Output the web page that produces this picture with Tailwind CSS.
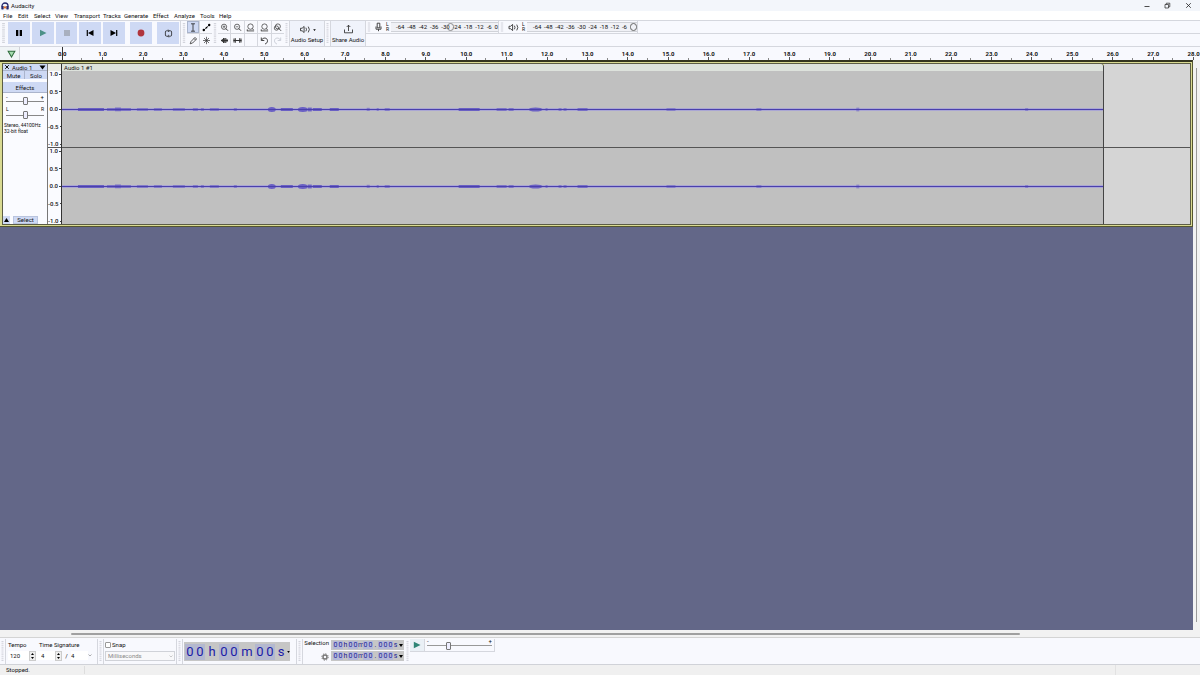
<!DOCTYPE html>
<html lang="en">
<head>
<meta charset="utf-8">
<title>Audacity</title>
<script src="https://cdn.jsdelivr.net/npm/@tailwindcss/browser@4"></script>
</head>
<body class="h-screen overflow-hidden flex flex-col bg-[#f8f9fe] text-[#111] text-[6px] leading-[8px] font-[Roboto,'Liberation_Sans',sans-serif]">
<svg width="0" height="0" class="absolute">
  <symbol id="wave" viewBox="0 0 1042 8" preserveAspectRatio="none">
    <rect y="3" width="1042" height="3" fill="#aaa6d4"/>
    <g fill="#6a60c4">
      <rect x="16" y="3" width="26" height="3"/><rect x="45" y="3" width="8" height="3" opacity=".7"/><rect x="53" y="2.6" width="6" height="3.6"/><rect x="59" y="3" width="10" height="3" opacity=".7"/>
      <g opacity=".6"><rect x="75" y="3" width="11" height="3"/><rect x="92" y="3" width="8" height="3"/><rect x="111" y="3" width="12" height="3"/><rect x="131" y="3" width="5" height="3"/><rect x="139" y="3" width="3" height="3"/><rect x="148" y="3" width="9" height="3"/><rect x="172" y="3" width="3" height="3"/></g>
      <ellipse cx="210" cy="4.5" rx="4" ry="2.5"/><rect x="219" y="3" width="12" height="3"/><ellipse cx="241" cy="4.5" rx="5" ry="2.5"/><rect x="246" y="2.6" width="4" height="3.8"/><rect x="251" y="3" width="9" height="3"/><rect x="268" y="3" width="9" height="3"/>
      <g opacity=".6"><rect x="305" y="2.8" width="3" height="3.2"/><rect x="315" y="3" width="2" height="3"/><rect x="323" y="3" width="5" height="3"/></g>
      <rect x="397" y="3" width="21" height="3"/><g opacity=".7"><rect x="435" y="3" width="10" height="3"/><rect x="447" y="3" width="5" height="3"/></g><ellipse cx="474" cy="4.5" rx="7" ry="2.1"/>
      <g opacity=".6"><rect x="484" y="3" width="2" height="3"/><rect x="497" y="3" width="3" height="3"/><rect x="502" y="3" width="3" height="3"/></g><rect x="516" y="3" width="10" height="3" opacity=".8"/>
      <g opacity=".55"><rect x="605" y="3" width="9" height="3"/><rect x="695" y="3" width="5" height="3"/><rect x="795" y="2.6" width="3" height="3.8"/><rect x="964" y="3" width="3" height="3"/></g>
    </g>
    <rect y="4" width="1042" height="1" fill="#4a40ac"/>
  </symbol>
  <symbol id="lens" viewBox="0 0 10 10"><circle cx="4.5" cy="4.2" r="2.9" fill="none" stroke="#333" stroke-width=".8"/><path d="M6.5 6.2 8.8 8.5" stroke="#333" stroke-width="1.1"/></symbol>
  <symbol id="fit" viewBox="0 0 10 10"><circle cx="5" cy="4" r="3" fill="none" stroke="#333" stroke-width=".8"/><path d="M7 6.2 8.5 7.8M1 8.8h8M1.4 7v1.8" fill="none" stroke="#333" stroke-width=".9"/></symbol>
  <symbol id="speaker" viewBox="0 0 12 10"><path d="M1 3.6h1.8L5 1.6v6.8L2.8 6.4H1zM7 3q1.3 2 0 4M9.6 1.8q2.4 3.2 0 6.4" fill="none" stroke="#222" stroke-width=".9"/></symbol>
  <symbol id="grip" viewBox="0 0 5 24" preserveAspectRatio="none"><path d="M2.5 2v20" stroke="#d2d4dc" stroke-width="2" stroke-dasharray="1 1"/></symbol>
</svg>

<header class="h-[11px] flex items-center shrink-0 bg-[#f3f6fb]">
  <svg class="w-[8px] h-[8px] ml-px" viewBox="0 0 8 8"><path d="M1 4.5V4a3 3 0 0 1 6 0v.5" fill="none" stroke="#23276e" stroke-width="1.3"/><rect x=".3" y="4" width="2.4" height="3.4" rx=".6" fill="#23276e"/><rect x="5.3" y="4" width="2.4" height="3.4" rx=".6" fill="#23276e"/><path d="M2.7 5.4h2.6" stroke="#e0702c" stroke-width="2"/></svg>
  <h1 class="ml-[2px] flex-1">Audacity</h1>
  <div class="flex items-center gap-[14px] mr-[8px]">
    <button aria-label="Minimize"><svg class="w-[6px] h-[6px]" viewBox="0 0 6 6"><path d="M.5 3.5h5" stroke="#222" stroke-width=".8"/></svg></button>
    <button aria-label="Restore"><svg class="w-[7px] h-[7px]" viewBox="0 0 7 7"><path d="M1 2.5h3.5V6H1zM2.3 2.3V1.2h3.5v3.6H4.7" fill="none" stroke="#222" stroke-width=".7"/></svg></button>
    <button aria-label="Close"><svg class="w-[7px] h-[7px]" viewBox="0 0 7 7"><path d="m1.2 1.2 4.6 4.6m0-4.6L1.2 5.8" stroke="#222" stroke-width=".8"/></svg></button>
  </div>
</header>

<nav class="h-[9px] shrink-0 flex items-center bg-white pl-[3px] *:shrink-0 *:whitespace-nowrap">
  <button class="w-[15px] text-left">File</button><button class="w-[16px] text-left">Edit</button><button class="w-[21px] text-left">Select</button><button class="w-[19px] text-left">View</button><button class="w-[29px] text-left">Transport</button><button class="w-[21px] text-left">Tracks</button><button class="w-[29px] text-left">Generate</button><button class="w-[21px] text-left">Effect</button><button class="w-[26px] text-left">Analyze</button><button class="w-[19px] text-left">Tools</button><button class="text-left">Help</button>
</nav>

<section aria-label="Toolbars" class="h-[27px] shrink-0 flex border-y border-[#d5d7de] *:shrink-0">
  <svg class="w-[7px] h-full"><use href="#grip"/></svg>
  <div class="flex items-center gap-[2px] border-r border-[#d5d7de] pl-px pb-px w-[174px]">
    <button aria-label="Pause" class="w-[22px] h-[22px] bg-[#ced9f4] grid place-items-center"><svg class="w-[8px] h-[8px]" viewBox="0 0 8 8"><path d="M1 1h2.3v6H1zM4.7 1H7v6H4.7z"/></svg></button>
    <button aria-label="Play" class="w-[22px] h-[22px] bg-[#ced9f4] grid place-items-center"><svg class="w-[8px] h-[8px]" viewBox="0 0 8 8"><path d="M1 .8 7.5 4 1 7.2z" fill="#4c9188"/></svg></button>
    <button aria-label="Stop" class="w-[21px] h-[22px] bg-[#ced9f4] grid place-items-center"><svg class="w-[8px] h-[8px]" viewBox="0 0 8 8"><path d="M1 1h6v6H1z" fill="#a9b0bf"/></svg></button>
    <button aria-label="Skip to start" class="w-[22px] h-[22px] bg-[#ced9f4] grid place-items-center"><svg class="w-[8px] h-[8px]" viewBox="0 0 8 8"><path d="M.7 1h1.2v6H.7zM7.5 1v6L2 4z"/></svg></button>
    <button aria-label="Skip to end" class="w-[22px] h-[22px] bg-[#ced9f4] grid place-items-center mr-[3px]"><svg class="w-[8px] h-[8px]" viewBox="0 0 8 8"><path d="M6.1 1h1.2v6H6.1zM.5 1v6L6 4z"/></svg></button>
    <button aria-label="Record" class="w-[22px] h-[22px] bg-[#ced9f4] grid place-items-center mr-[3px]"><svg class="w-[8px] h-[8px]" viewBox="0 0 8 8"><circle cx="4" cy="4" r="3.4" fill="#b0343c"/></svg></button>
    <button aria-label="Loop" class="w-[22px] h-[22px] bg-[#ced9f4] grid place-items-center"><svg class="w-[9px] h-[9px]" viewBox="0 0 9 9"><path d="M3.6 7.2H2.6Q1.4 7.2 1.4 6V3q0-1.2 1.2-1.2H5M5.4 1.8h1Q7.6 1.8 7.6 3v3q0 1.2-1.2 1.2H4M4.2.6 5.4 1.8 4.2 3M4.8 6 3.6 7.2l1.2 1.2" fill="none" stroke="#222" stroke-width=".8"/></svg></button>
  </div>
  <svg class="w-[6px] h-full"><use href="#grip"/></svg>
  <div class="grid grid-cols-2 grid-rows-2 w-[25px] gap-px bg-[#d5d7de] *:grid *:place-items-center">
    <button aria-label="Selection tool" class="bg-[#ced9f4] border border-[#a9b4cc]"><svg class="w-[8px] h-[9px]" viewBox="0 0 8 9"><path d="M2 .8h4M4 .8v7.4M2 8.2h4" fill="none" stroke="#222" stroke-width=".8"/></svg></button>
    <button aria-label="Envelope tool" class="bg-[#f8f9fe]"><svg class="w-[9px] h-[9px]" viewBox="0 0 9 9"><path d="M1.5 7.5 7.5 1.7" stroke="#222" stroke-width=".8"/><circle cx="1.8" cy="7" r="1.2"/><circle cx="4.5" cy="4.6" r=".9"/><circle cx="7.2" cy="2" r="1.2"/></svg></button>
    <button aria-label="Draw tool" class="bg-[#f8f9fe]"><svg class="w-[9px] h-[9px]" viewBox="0 0 9 9"><path d="M1.2 7.8 2 5.5 6 1.4l1.6 1.6-4 4zM5 2.5l1.6 1.6" fill="none" stroke="#333" stroke-width=".8"/></svg></button>
    <button aria-label="Multi-tool" class="bg-[#f8f9fe]"><svg class="w-[9px] h-[9px]" viewBox="0 0 9 9"><path d="M4.5.8v7.4M1 4.5h7M2 2l5 5M7 2 2 7" stroke="#333" stroke-width=".7"/></svg></button>
  </div>
  <svg class="w-[6px] h-full"><use href="#grip"/></svg>
  <div class="grid grid-cols-5 grid-rows-2 w-[66px] gap-px bg-[#d5d7de] *:grid *:place-items-center *:bg-[#f8f9fe]">
    <button aria-label="Zoom in"><svg class="w-[9px] h-[9px]" viewBox="0 0 10 10"><use href="#lens"/><path d="M3 4.2h3M4.5 2.7v3" stroke="#333" stroke-width=".7"/></svg></button>
    <button aria-label="Zoom out"><svg class="w-[9px] h-[9px]" viewBox="0 0 10 10"><use href="#lens"/><path d="M3 4.2h3" stroke="#333" stroke-width=".7"/></svg></button>
    <button aria-label="Fit selection"><svg class="w-[9px] h-[9px]"><use href="#fit"/></svg></button>
    <button aria-label="Fit project"><svg class="w-[9px] h-[9px]"><use href="#fit"/></svg></button>
    <button aria-label="Zoom toggle"><svg class="w-[9px] h-[9px]" viewBox="0 0 10 10"><circle cx="5.4" cy="3.8" r="2.8" fill="none" stroke="#333" stroke-width=".8"/><circle cx="3.8" cy="5.6" r="2.4" fill="none" stroke="#333" stroke-width=".8"/><path d="M6.5 6.2 9 8.7" stroke="#333" stroke-width="1"/></svg></button>
    <button aria-label="Trim audio"><svg class="w-[9px] h-[9px]" viewBox="0 0 9 9"><path d="M1 4.5h7M2.3 3v3M3.5 2v5M4.7 2.2v4.6M5.8 2v5M7 3v3" stroke="#333" stroke-width="1"/></svg></button>
    <button aria-label="Silence audio"><svg class="w-[9px] h-[9px]" viewBox="0 0 9 9"><path d="M.5 4.5h8M1 2.5v4M2.3 2.2v4.6M6.7 2.2v4.6M8 2.5v4" stroke="#333" stroke-width="1"/></svg></button>
    <span></span>
    <button aria-label="Undo"><svg class="w-[9px] h-[9px]" viewBox="0 0 9 9"><path d="M1.3 1.5v3h3M1.5 4.2C3 1 7.5 1.5 7.5 4.8 7.5 6.5 6.5 7.5 5 8" fill="none" stroke="#333" stroke-width=".9"/></svg></button>
    <button aria-label="Redo"><svg class="w-[9px] h-[9px]" viewBox="0 0 9 9"><path d="M7.7 1.5v3h-3M7.5 4.2C6 1 1.5 1.5 1.5 4.8 1.5 6.5 2.5 7.5 4 8" fill="none" stroke="#c3c7d0" stroke-width=".8"/></svg></button>
  </div>
  <svg class="w-[5px] h-full"><use href="#grip"/></svg>
  <button class="w-[36px] border-x border-[#d5d7de] bg-[#f0f3fb] flex flex-col items-center justify-end gap-[2px] pb-[2px] whitespace-nowrap">
    <span class="flex items-center gap-[2px]"><svg class="w-[12px] h-[9px]"><use href="#speaker"/></svg><svg class="w-[3px] h-[2px]" viewBox="0 0 4 3"><path d="M0 .5h4L2 3z"/></svg></span>Audio Setup
  </button>
  <svg class="w-[5px] h-full"><use href="#grip"/></svg>
  <button class="w-[36px] border-x border-[#d5d7de] bg-[#f0f3fb] flex flex-col items-center justify-end gap-[2px] pb-[2px] whitespace-nowrap">
    <svg class="w-[11px] h-[10px]" viewBox="0 0 11 10"><path d="M1.5 5.5v3.3h8V5.5M5.5 7V1.3M3.7 3l1.8-1.8L7.3 3" fill="none" stroke="#222" stroke-width=".8"/></svg>Share Audio
  </button>
  <div class="flex-1 min-w-0">
    <div class="h-[13px] border-b border-[#d5d7de] flex">
      <svg class="w-[6px] h-full"><use href="#grip"/></svg>
      <div class="w-[127px] flex items-center border-r border-[#d5d7de] text-[6px]">
        <button aria-label="Record meter" class="w-[13px] grid place-items-center"><svg class="w-[7px] h-[10px]" viewBox="0 0 7 10"><path d="M2.2 1.2h2.6v4.6H2.2zM1 4.5v2.7h5V4.5M3.5 7.2v2" fill="none" stroke="#333" stroke-width=".9"/></svg></button>
        <span class="w-[6px] pl-px text-[5px] leading-[5px]">L<br>R</span>
        <div data-meter="record" class="relative flex-1 flex justify-between bg-[#f0f1f6] border-y border-[#d0d2d8] pl-[5px]"></div>
      </div>
      <svg class="w-[6px] h-full"><use href="#grip"/></svg>
      <div class="w-[133px] flex items-center border-r border-[#d5d7de] text-[6px]">
        <button aria-label="Playback meter" class="w-[16px] grid place-items-center"><svg class="w-[11px] h-[9px]"><use href="#speaker"/></svg></button>
        <span class="w-[6px] pl-px text-[5px] leading-[5px]">L<br>R</span>
        <div data-meter="play" class="relative flex-1 flex justify-between bg-[#f0f1f6] border-y border-[#d0d2d8] pl-[6px] pr-[10px]"></div>
      </div>
    </div>
  </div>
</section>

<section aria-label="Timeline" class="h-[13px] shrink-0 flex overflow-hidden relative text-[6px] font-bold">
  <button aria-label="Pin play head" class="w-[20px] border-r border-[#d0d2d8] grid place-items-center shrink-0 bg-[#f0f4f6] pl-[4px]"><svg class="w-[9px] h-[8px]" viewBox="0 0 8 7"><path d="M1 1h6L4 6.2z" fill="#a5dcae" stroke="#2d6a3b" stroke-width=".9"/></svg></button>
  <div id="ruler" class="flex flex-1 ml-[22px] mr-[-14px]"></div>
  <div class="absolute left-[62px] top-0 w-px h-full bg-[#333]"></div>
</section>

<main class="flex-1 min-h-0 flex bg-[#f2f2f2]">
  <div class="flex-1 min-w-0 bg-[#636788]">
    <article class="h-[167px] border-t-2 border-t-[#34351f] border-b border-b-[#55562e] border-r border-r-[#55562e] bg-[#d9da92] pt-px pb-px pr-px pl-[2px] flex">
      <div class="flex flex-1 min-w-0 border border-[#5c5d45]">
        <aside class="w-[45px] shrink-0 bg-[#fafbff] border-r border-[#777] flex flex-col leading-[7px] text-[6px]">
          <div class="h-[7px] flex items-center bg-[#ced9f4] border-b border-[#aab4cc] px-px">
            <button aria-label="Close track"><svg class="w-[6px] h-[6px]" viewBox="0 0 6 6"><path d="m1.2 1.2 3.6 3.6m0-3.6L1.2 4.8" stroke="#111" stroke-width="1"/></svg></button>
            <button class="flex-1 flex items-center justify-between pl-[2px] whitespace-nowrap">Audio 1<svg class="w-[7px] h-[5px]" viewBox="0 0 7 5"><path d="M.5.5h6L3.5 4.5z"/></svg></button>
          </div>
          <div class="h-[8px] grid grid-cols-2 bg-[#ced9f4]"><button class="border-r border-[#aab4cc]">Mute</button><button>Solo</button></div>
          <button class="mt-[3px] h-[11px] bg-[#ced9f4] border-b border-[#aab4cc]">Effects</button>
          <div class="px-[3px] mt-px h-[13px]">
            <div class="flex justify-between leading-[5px] h-[3px]"><span>-</span><span>+</span></div>
            <input type="range" value="50" aria-label="Gain" class="block w-full h-[8px] appearance-none bg-[linear-gradient(#888,#888)] bg-no-repeat bg-center bg-[length:100%_1px] [&::-webkit-slider-thumb]:appearance-none [&::-webkit-slider-thumb]:w-[5px] [&::-webkit-slider-thumb]:h-[8px] [&::-webkit-slider-thumb]:bg-[#eef] [&::-webkit-slider-thumb]:border [&::-webkit-slider-thumb]:border-[#777] [&::-webkit-slider-thumb]:rounded-[1px]">
          </div>
          <div class="px-[3px] h-[15px]">
            <div class="flex justify-between leading-[5px] h-[4px] text-[5px]"><span>L</span><span>R</span></div>
            <input type="range" value="50" aria-label="Pan" class="block w-full h-[8px] appearance-none bg-[linear-gradient(#888,#888)] bg-no-repeat bg-center bg-[length:100%_1px] [&::-webkit-slider-thumb]:appearance-none [&::-webkit-slider-thumb]:w-[5px] [&::-webkit-slider-thumb]:h-[8px] [&::-webkit-slider-thumb]:bg-[#eef] [&::-webkit-slider-thumb]:border [&::-webkit-slider-thumb]:border-[#777] [&::-webkit-slider-thumb]:rounded-[1px]">
          </div>
          <p class="leading-[6px] whitespace-nowrap text-[5px] pl-px">Stereo, 44100Hz<br>32-bit float</p>
          <div class="mt-auto flex gap-[3px] h-[8px]"><button aria-label="Collapse" class="w-[7px] bg-[#ced9f4] grid place-items-center"><svg class="w-[5px] h-[4px]" viewBox="0 0 5 4"><path d="M0 4h5L2.5 0z"/></svg></button><button class="w-[25px] bg-[#ced9f4] border border-[#b9c4de] leading-[6px]">Select</button></div>
        </aside>
        <div class="w-[14px] shrink-0 flex flex-col bg-[#fafbff] border-r border-[#333] text-[6px] leading-[6px] text-right font-medium">
          <div class="h-[7px] bg-[#ecece8]"></div>
          <div data-scale class="flex-1 flex flex-col justify-between border-b border-[#555]"></div>
          <div data-scale class="flex-1 flex flex-col justify-between"></div>
        </div>
        <div class="flex-[1042] min-w-0 flex flex-col bg-[#c0c0c0] border-r border-[#444] rounded-tr-[3px]">
          <div class="h-[7px] bg-[#dde2dc] pl-[2px] text-[6px] leading-[7px] rounded-tr-[3px]">Audio 1 #1</div>
          <div class="flex-1 flex items-center border-b border-[#555]"><svg class="w-full h-[8px]"><use href="#wave"/></svg></div>
          <div class="flex-1 flex items-center"><svg class="w-full h-[8px]"><use href="#wave"/></svg></div>
        </div>
        <div class="flex-[86] flex flex-col bg-[#d5d5d5]"><div class="h-[7px]"></div><div class="flex-1 border-b border-[#555]"></div><div class="flex-1"></div></div>
      </div>
    </article>
  </div>
  <div class="w-[7px] shrink-0 flex justify-center pt-[8px] pb-[8px]"><div class="w-px bg-[#999]"></div></div>
</main>

<div class="h-[8px] shrink-0 bg-[#f2f2f2] border-b border-[#d4d4d4] pt-[3px] pl-[71px] pr-[180px]"><div class="h-[2px] bg-[#a0a0a0] rounded-full"></div></div>

<section aria-label="Bottom toolbars" class="h-[27px] shrink-0 flex border-b border-[#d0d2d8] pt-px *:shrink-0">
  <svg class="w-[5px] h-full"><use href="#grip"/></svg>
  <div class="w-[93px] border-x border-[#d5d7de] pl-[2px] pt-px">
    <div class="flex h-[10px] items-center whitespace-nowrap"><label for="tempo" class="w-[31px]">Tempo</label><label for="sig">Time Signature</label></div>
    <div class="flex h-[11px] items-center">
      <input id="tempo" value="120" class="w-[21px] h-[9px] bg-white pl-[2px]">
      <span class="w-[7px] h-[10px] border border-[#ccc] bg-[#eee] flex flex-col justify-around items-center"><button aria-label="Increase tempo" class="h-[3px]"><svg class="w-[3px] h-[2px]" viewBox="0 0 3 2"><path d="M0 2h3L1.5 0z"/></svg></button><button aria-label="Decrease tempo" class="h-[3px]"><svg class="w-[3px] h-[2px]" viewBox="0 0 3 2"><path d="M0 0h3L1.5 2z"/></svg></button></span>
      <input id="sig" value="4" class="w-[19px] h-[9px] bg-white pl-[5px]">
      <span class="w-[7px] h-[10px] border border-[#ccc] bg-[#eee] flex flex-col justify-around items-center"><button aria-label="Increase beats" class="h-[3px]"><svg class="w-[3px] h-[2px]" viewBox="0 0 3 2"><path d="M0 2h3L1.5 0z"/></svg></button><button aria-label="Decrease beats" class="h-[3px]"><svg class="w-[3px] h-[2px]" viewBox="0 0 3 2"><path d="M0 0h3L1.5 2z"/></svg></button></span>
      <span class="w-[9px] text-center">/</span>
      <select aria-label="Beat unit" class="appearance-none flex-1 h-[9px] bg-white"><option>4</option></select>
      <svg class="w-[4px] h-[3px] mr-[5px]" viewBox="0 0 4 3"><path d="m.5.5 1.5 1.5L3.5.5" fill="none" stroke="#777" stroke-width=".6"/></svg>
    </div>
  </div>
  <svg class="w-[5px] h-full"><use href="#grip"/></svg>
  <div class="w-[74px] border-x border-[#d5d7de] pl-px pr-px pt-px">
    <label class="flex items-center gap-px h-[9px]"><input type="checkbox" class="appearance-none w-[6px] h-[6px] border border-[#999] bg-white rounded-[1px]">Snap</label>
    <div class="mt-[2px] h-[10px] flex items-center border border-[#d0d2d8] bg-[#f8f8fa]"><select aria-label="Snap to" disabled class="appearance-none flex-1 h-[8px] pl-[2px] text-[#888]"><option>Milliseconds</option></select><svg class="w-[4px] h-[3px] mr-px" viewBox="0 0 4 3"><path d="m.5.5 1.5 1.5L3.5.5" fill="none" stroke="#aaa" stroke-width=".6"/></svg></div>
  </div>
  <svg class="w-[5px] h-full"><use href="#grip"/></svg>
  <div class="flex items-center w-[115px] border-x border-[#d5d7de] pl-px">
    <div class="flex items-center h-[19px] w-[106px] pl-px bg-[#c6c6c6] text-[#1c1ca8] text-[13px] leading-[16px] text-center"><span class="w-[10px] bg-[#b4b8cf]">0</span><span class="w-[10px] bg-[#b4b8cf]">0</span><span class="w-[14px]">h</span><span class="w-[10px] bg-[#b4b8cf]">0</span><span class="w-[10px] bg-[#b4b8cf]">0</span><span class="w-[16px]">m</span><span class="w-[10px] bg-[#b4b8cf]">0</span><span class="w-[10px] bg-[#b4b8cf]">0</span><span class="w-[12px]">s</span><svg class="w-[3px] h-[2px]" viewBox="0 0 4 3"><path d="M0 0h4L2 3z"/></svg></div>
  </div>
  <svg class="w-[5px] h-full"><use href="#grip"/></svg>
  <div class="w-[103px] border-l border-[#d5d7de] flex">
    <div class="w-[28px] flex flex-col items-end pr-[2px] justify-between pb-[3px]"><span>Selection</span><button aria-label="Selection settings"><svg class="block w-[8px] h-[8px]" viewBox="0 0 8 8"><circle cx="4" cy="4" r="2" fill="none" stroke="#777" stroke-width="1.4"/><circle cx="4" cy="4" r="3.2" fill="none" stroke="#777" stroke-width="1" stroke-dasharray="1.3 1.2"/></svg></button></div>
    <div id="selection" class="flex flex-col gap-px pt-px"></div>
  </div>
  <svg class="w-[5px] h-full"><use href="#grip"/></svg>
  <div class="h-[13px] flex border-b border-r border-[#d5d7de] w-[85px]">
    <button aria-label="Play at speed" class="w-[15px] bg-[#eaf0f6] grid place-items-center border-r border-[#d5d7de]"><svg class="w-[8px] h-[8px]" viewBox="0 0 8 8"><path d="M.8.8 7.5 4 .8 7.2z" fill="#2f8576"/></svg></button>
    <div class="flex-1 px-[2px]"><div class="flex justify-between leading-[4px] h-[2px]"><span>-</span><span>+</span></div>
    <input type="range" value="32" aria-label="Playback speed" class="block w-full h-[9px] appearance-none bg-[linear-gradient(#999,#999)] bg-no-repeat bg-center bg-[length:100%_1px] [&::-webkit-slider-thumb]:appearance-none [&::-webkit-slider-thumb]:w-[5px] [&::-webkit-slider-thumb]:h-[8px] [&::-webkit-slider-thumb]:bg-[#eef] [&::-webkit-slider-thumb]:border [&::-webkit-slider-thumb]:border-[#777] [&::-webkit-slider-thumb]:rounded-[1px]"></div>
  </div>
</section>

<footer class="h-[10px] shrink-0 flex items-center bg-[#f0f0f0] pl-[6px]"><span class="w-[79px] border-r border-[#ddd]">Stopped.</span><span class="flex-1 h-full border-r border-[#e2e2e2] mr-[84px]"></span></footer>

<script>
  // Timeline labels: one cell per second, major tick centred, minor tick at the edge.
  document.getElementById('ruler').innerHTML = Array.from({length: 29}, (_, i) =>
    `<div class="flex-1 basis-0 flex flex-col items-center justify-end"><span class="leading-[7px]">${i}.0</span><div class="w-full flex items-end justify-between h-[3px]"><i class="w-px h-0"></i><i class="w-px h-[3px] bg-[#555]"></i><i class="w-px h-[2px] bg-[#888]"></i></div></div>`).join('');

  // Amplitude scale of each channel, a tick beside every value.
  document.querySelectorAll('[data-scale]').forEach(s => {
    s.innerHTML = ['1.0', '0.5', '0.0', '-0.5', '-1.0'].map(v =>
      `<span class="flex items-center justify-end gap-px">${v}<i class="w-[2px] h-px bg-[#444]"></i></span>`).join('');
  });

  const levels = ['-64', '-48', '-42', '-36', '-30', '-24', '-18', '-12', '-6', '0'];
  const knob = {
    record: '<i class="absolute left-[56px] top-0 w-[7px] h-[8px] border border-[#888] rounded-full"></i>',
    play: '<i class="absolute right-0 top-0 w-[7px] h-[8px] border border-[#666] rounded-full"></i>'
  };
  document.querySelectorAll('[data-meter]').forEach(m => {
    const kind = m.dataset.meter;
    const shown = kind === 'play' ? levels.slice(0, 9) : levels;
    m.innerHTML = shown.map(l => `<span class="leading-[8px]">${l}</span>`).join('') + knob[kind];
  });

  const cells = [...'00h00m00.000s'].map(c =>
    `<span class="w-[5px] ${/\d/.test(c) ? 'bg-[#b4b8d8]' : ''}">${c}</span>`).join('');
  document.getElementById('selection').innerHTML = Array(2).fill(
    `<div class="w-[73px] h-[10px] bg-[#c6c6c6] flex items-center pl-[2px] text-[7px] leading-[8px] text-center text-[#1c1c98]">${cells}<svg class="w-[4px] h-[3px] ml-px" viewBox="0 0 4 3"><path d="M0 0h4L2 3z"/></svg></div>`).join('');
</script>
</body>
</html>
